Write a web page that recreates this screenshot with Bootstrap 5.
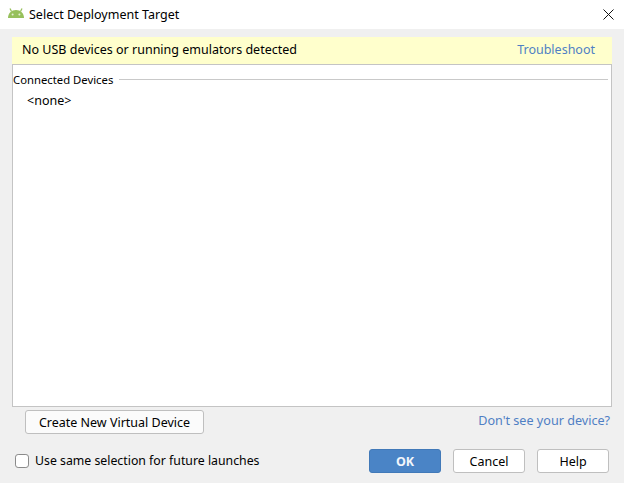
<!DOCTYPE html>
<html lang="en">
<head>
  <meta charset="UTF-8">
  <title>Select Deployment Target</title>
  <link href="https://cdn.jsdelivr.net/npm/bootstrap@5.3.3/dist/css/bootstrap.min.css" rel="stylesheet">
  <style>
    html, body {
      height: 483px;
      overflow: hidden;
    }

    body {
      background-color: #f0f0f0;
      color: #000;
      font-family: "Noto Sans", sans-serif;
      font-size: 12.5px;
      line-height: 18px;
    }

    .title-bar {
      height: 29px;
      background-color: #fff;
      padding: 0 10px 0 8px;
    }

    .title-icon {
      margin-bottom: 3px;
    }

    .title-text {
      margin-left: 5px;
    }

    .dialog-body {
      padding: 8px 12px 0 12px;
    }

    .warn-banner {
      height: 27px;
      background-color: #ffffcc;
      padding: 0 17px 1px 10px;
    }

    .link-up {
      margin-bottom: 1px;
    }

    .link-blue {
      color: #4f7fc4;
      text-decoration: none;
    }

    .device-panel {
      height: 343px;
      background-color: #fff;
      border: 1px solid #c4c4c4;
    }

    .group-head {
      padding: 6px 3px 0 0;
      font-size: 11.3px;
    }

    .group-line {
      height: 1px;
      background-color: #c9c9c9;
      margin: 0 0 1px 6px;
    }

    .none-row {
      padding: 3px 0 0 14px;
    }

    .under-row {
      height: 31px;
      padding: 3px 2px 0 13px;
    }

    .link-side {
      margin-top: 2px;
      font-size: 12.6px;
    }

    .ide-btn {
      height: 24px;
      padding: 1px 0 0;
      font-size: 12.5px;
      line-height: 21px;
      color: #000;
      background-color: #fff;
      border: 1px solid #bfbfbf;
      border-radius: 3px;
    }

    .btn-create {
      width: 179px;
      background-color: #fbfbfb;
    }

    .btn-dialog {
      width: 72px;
    }

    .btn-ok {
      background-color: #4a84c6;
      border-color: #4179b8;
      color: #f2f6fb;
      font-weight: 700;
    }

    .footer-row {
      padding: 11px 3px 0 3px;
    }

    .box-check {
      width: 14px;
      height: 14px;
      margin: 0 6px 0 0;
      background-color: #fff;
      border: 1px solid #8a8a8a;
      border-radius: 3px;
      float: none;
    }

    .check-label {
      font-size: 12.3px;
    }

    .btn-gap {
      gap: 12px;
    }
  </style>
</head>
<body>
  <div class="title-bar d-flex align-items-center">
    <svg class="title-icon" width="16" height="10" viewBox="0 0 16 10">
      <path d="M0 10 C0 5 3.5 2 8 2 C12.5 2 16 5 16 10 Z" fill="#97c05c"/>
      <path d="M3.5 3.5 L2 0.5 M12.5 3.5 L14 0.5" stroke="#97c05c" stroke-width="1.3"/>
      <circle cx="4.6" cy="6.4" r="1" fill="#e6f0d6"/>
      <circle cx="11.4" cy="6.4" r="1" fill="#e6f0d6"/>
    </svg>
    <span class="title-text">Select Deployment Target</span>
    <svg class="ms-auto" width="11" height="11" viewBox="0 0 11 11">
      <path d="M0.5 0.5 L10.5 10.5 M10.5 0.5 L0.5 10.5" stroke="#111" stroke-width="1"/>
    </svg>
  </div>

  <div class="dialog-body">
    <div class="warn-banner d-flex align-items-center justify-content-between">
      <span>No USB devices or running emulators detected</span>
      <a href="#" class="link-blue link-up">Troubleshoot</a>
    </div>

    <div class="device-panel">
      <div class="group-head d-flex align-items-center">
        <span>Connected Devices</span>
        <div class="group-line flex-grow-1"></div>
      </div>
      <div class="none-row">&lt;none&gt;</div>
    </div>

    <div class="under-row d-flex align-items-start justify-content-between">
      <button type="button" class="btn ide-btn btn-create">Create New Virtual Device</button>
      <a href="#" class="link-blue link-side">Don't see your device?</a>
    </div>

    <div class="footer-row d-flex align-items-center">
      <input type="checkbox" class="form-check-input box-check">
      <span class="check-label">Use same selection for future launches</span>
      <div class="d-flex btn-gap ms-auto">
        <button type="button" class="btn ide-btn btn-dialog btn-ok">OK</button>
        <button type="button" class="btn ide-btn btn-dialog">Cancel</button>
        <button type="button" class="btn ide-btn btn-dialog">Help</button>
      </div>
    </div>
  </div>

  <script src="https://cdn.jsdelivr.net/npm/bootstrap@5.3.3/dist/js/bootstrap.bundle.min.js"></script>
</body>
</html>
